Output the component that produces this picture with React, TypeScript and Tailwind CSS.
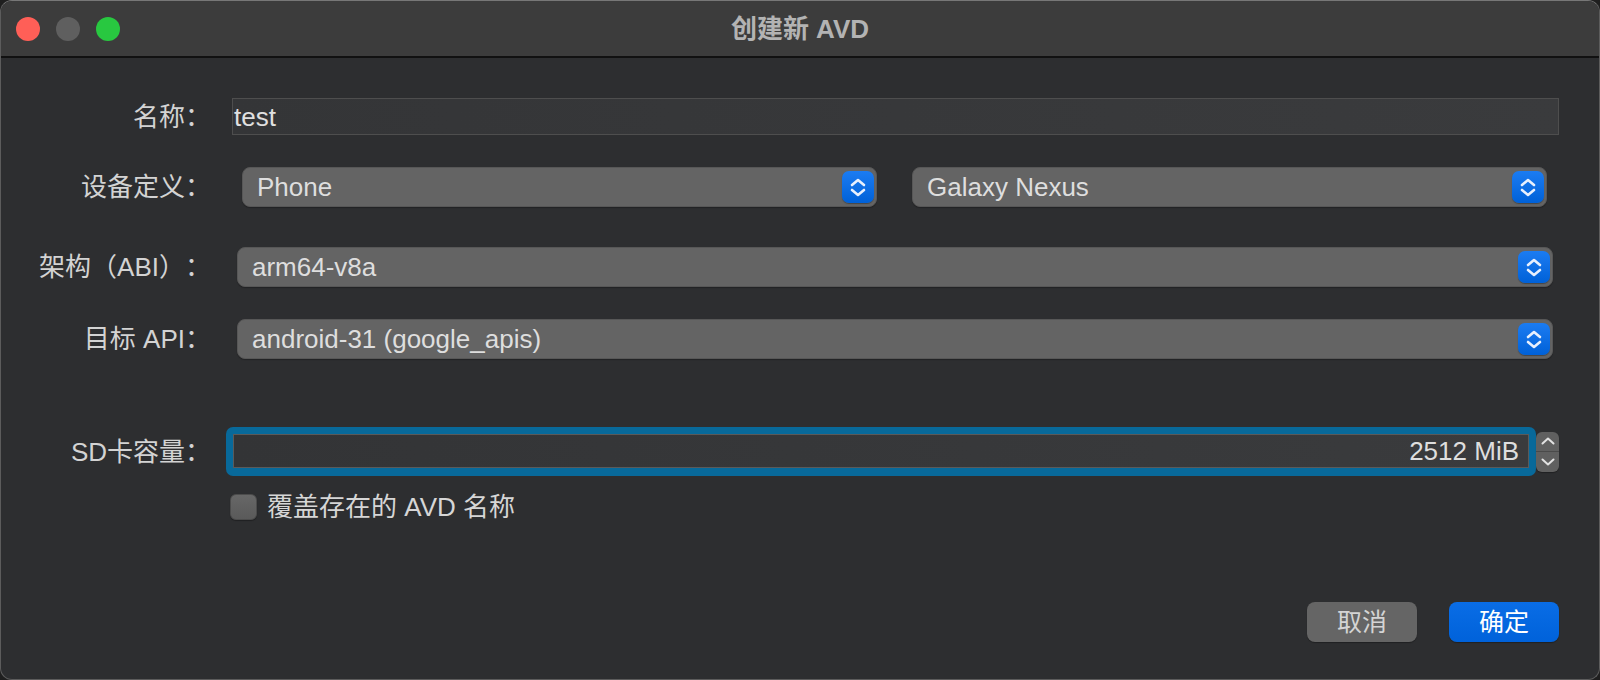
import React from 'react';

const font = "font-['Liberation_Sans','Noto_Sans_CJK_SC',sans-serif]";

const Chevrons = ({ className = '' }: { className?: string }) => (
    <svg viewBox="0 0 32 32" className={className} fill="none" stroke="currentColor" strokeWidth="2.6" strokeLinecap="round" strokeLinejoin="round">
        <path d="M10 14 L16 9 L22 14" />
        <path d="M10 19 L16 24 L22 19" />
    </svg>
);

const Popup = ({ value }: { value: string }) => (
    <div className="flex-1 h-[40px] rounded-[8px] bg-[#646464] border border-[#575757] shadow-[0_1px_1px_rgba(0,0,0,0.25)] flex items-center pl-[14px] pr-[2px]">
        <span className="flex-1 text-[#dedede] leading-none">{value}</span>
        <div className="w-[32px] h-[32px] rounded-[7px] bg-gradient-to-b from-[#1b7cf2] to-[#0061d8] shadow-[0_1px_1px_rgba(0,0,0,0.3)] flex items-center justify-center text-[#e8f0fd]">
            <Chevrons className="w-[32px] h-[32px]" />
        </div>
    </div>
);

const Label = ({ children }: { children: React.ReactNode }) => (
    <div className="w-[210px] shrink-0 text-right text-[#d3d3d3] leading-none">{children}</div>
);

export default function App() {
    return (
        <div className={`w-[1600px] h-[680px] bg-[#1f1f1f] ${font} text-[26px] [text-spacing-trim:space-all]`}>
            <div className="h-full rounded-[12px] border border-[#5c5c5c] border-t-[#777] bg-[#2d2e30] overflow-hidden flex flex-col">
                {/* title bar */}
                <div className="h-[57px] shrink-0 bg-[#3c3c3c] border-b-2 border-[#111] flex items-center relative">
                    <div className="flex items-center gap-[16px] pl-[15px]">
                        <div className="w-[24px] h-[24px] rounded-full bg-[#ff5f57]" />
                        <div className="w-[24px] h-[24px] rounded-full bg-[#5f5f5f]" />
                        <div className="w-[24px] h-[24px] rounded-full bg-[#28c840]" />
                    </div>
                    <div className="absolute inset-0 flex items-center justify-center font-bold text-[#b3b3b3] text-[26px] leading-none">
                        创建新 AVD
                    </div>
                </div>

                {/* form */}
                <div className="flex-1 flex flex-col pr-[40px] pb-[37px]">
                    <div className="flex items-center h-[37px] mt-[40px]">
                        <Label>名称：</Label>
                        <div className="flex-1 ml-[21px] h-[37px] bg-gradient-to-r from-[#343537] to-[#3a3b3d] border border-[#4e4e4e] flex items-center pl-[1px] pt-[2px] text-[#e0e0e0]">
                            test
                        </div>
                    </div>

                    <div className="flex items-center h-[40px] mt-[32px] mr-[12px]">
                        <Label>设备定义：</Label>
                        <div className="flex-1 ml-[31px] flex gap-[35px]">
                            <Popup value="Phone" />
                            <Popup value="Galaxy Nexus" />
                        </div>
                    </div>

                    <div className="flex items-center h-[40px] mt-[40px] mr-[6px]">
                        <Label>架构（ABI）：</Label>
                        <div className="flex-1 ml-[26px] flex">
                            <Popup value="arm64-v8a" />
                        </div>
                    </div>

                    <div className="flex items-center h-[40px] mt-[32px] mr-[6px]">
                        <Label>目标 API：</Label>
                        <div className="flex-1 ml-[26px] flex">
                            <Popup value="android-31 (google_apis)" />
                        </div>
                    </div>

                    <div className="flex items-center h-[49px] mt-[68px]">
                        <Label>SD卡容量：</Label>
                        <div className="flex-1 ml-[15px] h-[49px] rounded-[7px] bg-[#08699a] pt-[7px] pl-[7px] pr-[7px] pb-[8px]">
                            <div className="h-full bg-gradient-to-r from-[#333436] to-[#3a3b3d] border border-[#5a5a5a] flex items-center justify-end pr-[9px] text-[#dedede] leading-none">
                                2512 MiB
                            </div>
                        </div>
                        <div className="w-[23px] h-[40px] rounded-[6px] bg-[#606060] flex flex-col text-[#e2e2e2] shadow-[0_1px_1px_rgba(0,0,0,0.3)]">
                            <div className="flex-1 flex items-center justify-center border-b border-[#4a4a4a]">
                                <svg viewBox="0 0 14 8" className="w-[14px] h-[8px]" fill="none" stroke="currentColor" strokeWidth="2" strokeLinecap="round" strokeLinejoin="round">
                                    <path d="M1.5 6.5 L7 1.5 L12.5 6.5" />
                                </svg>
                            </div>
                            <div className="flex-1 flex items-center justify-center">
                                <svg viewBox="0 0 14 8" className="w-[14px] h-[8px]" fill="none" stroke="currentColor" strokeWidth="2" strokeLinecap="round" strokeLinejoin="round">
                                    <path d="M1.5 1.5 L7 6.5 L12.5 1.5" />
                                </svg>
                            </div>
                        </div>
                    </div>

                    <div className="flex items-center h-[26px] mt-[18px]">
                        <div className="w-[229px] shrink-0" />
                        <div className="w-[27px] h-[26px] rounded-[6px] bg-gradient-to-b from-[#676767] to-[#5a5a5a] border border-[#4c4c4c] shadow-[0_1px_1px_rgba(0,0,0,0.3)]" />
                        <span className="ml-[10px] text-[#d6d6d6] leading-none">覆盖存在的 AVD 名称</span>
                    </div>

                    <div className="mt-auto flex justify-end gap-[32px]">
                        <button className="w-[110px] h-[40px] rounded-[8px] bg-[#656565] text-[#d4d4d4] text-[25px] leading-none shadow-[0_1px_1px_rgba(0,0,0,0.3)]">
                            取消
                        </button>
                        <button className="w-[110px] h-[40px] rounded-[8px] bg-gradient-to-b from-[#0a6de6] to-[#0062da] text-white text-[25px] leading-none shadow-[0_1px_1px_rgba(0,0,0,0.3)]">
                            确定
                        </button>
                    </div>
                </div>
            </div>
        </div>
    );
}
